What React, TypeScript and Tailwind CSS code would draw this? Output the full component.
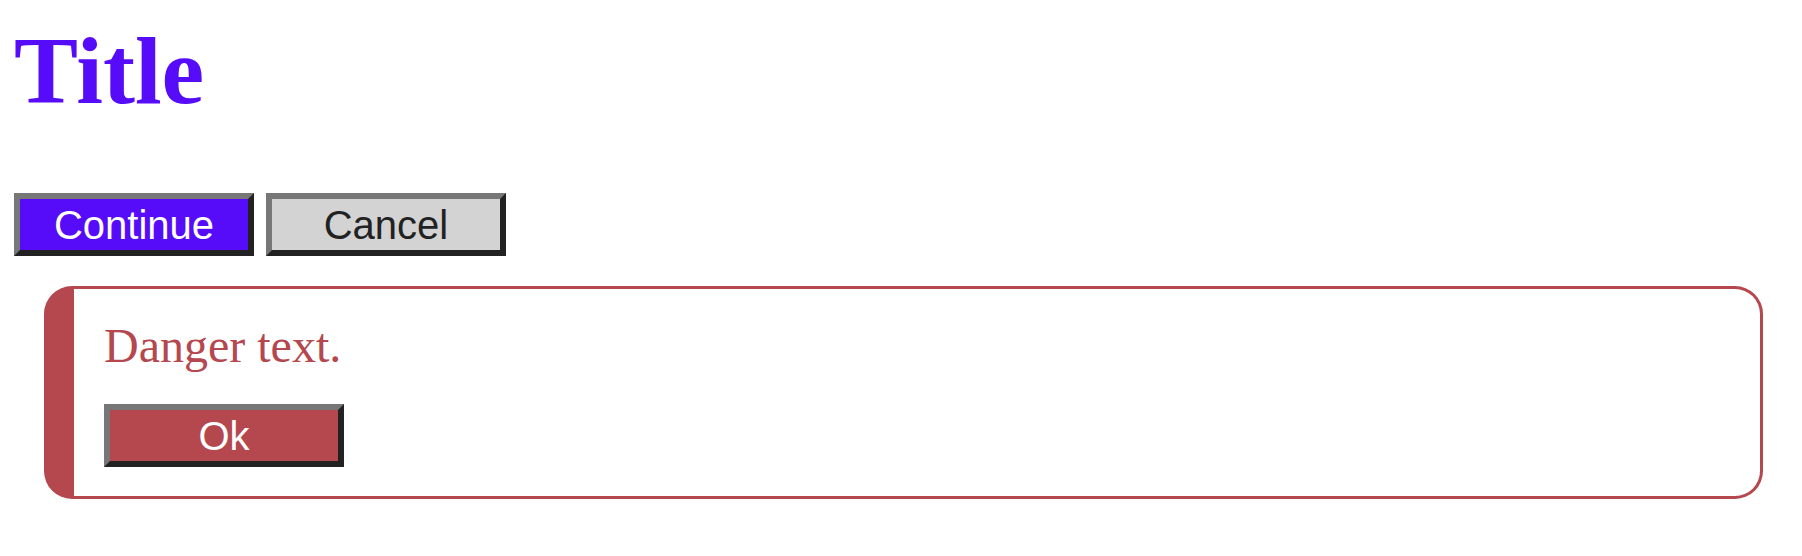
import React from 'react';

type BtnProps = { label: string; className: string };

const Button: React.FC<BtnProps> = ({ label, className }) => (
  <button
    className={`flex h-[63px] w-[240px] items-center justify-center border-[6px] border-t-[#777777] border-l-[#777777] border-b-[#222222] border-r-[#222222] font-['Liberation_Sans',Arial,sans-serif] text-[40px] leading-none ${className}`}
  >
    {label}
  </button>
);

const App: React.FC = () => {
  return (
    <div className="min-h-[556px] bg-white pl-[14px] pr-[9px] pt-[23px]">
      <h1 className="h-[96px] font-['Liberation_Serif','Times_New_Roman',serif] text-[96px] font-bold leading-[96px] text-[#560cf8]">
        Title
      </h1>

      <div className="mt-[74px] flex gap-[12px]">
        <Button label="Continue" className="bg-[#560cf8] text-white" />
        <Button label="Cancel" className="bg-[#d3d3d3] text-[#222222]" />
      </div>

      <div className="mx-[30px] mt-[30px] rounded-[28px] border-[3px] border-l-[30px] border-[#b5474e] px-[30px] pt-[33px] pb-[29px]">
        <p className="font-['Liberation_Serif','Times_New_Roman',serif] text-[48px] leading-[48px] text-[#b5474e]">
          Danger text.
        </p>
        <div className="mt-[34px]">
          <Button label="Ok" className="bg-[#b5474e] text-white" />
        </div>
      </div>
    </div>
  );
};

export default App;
